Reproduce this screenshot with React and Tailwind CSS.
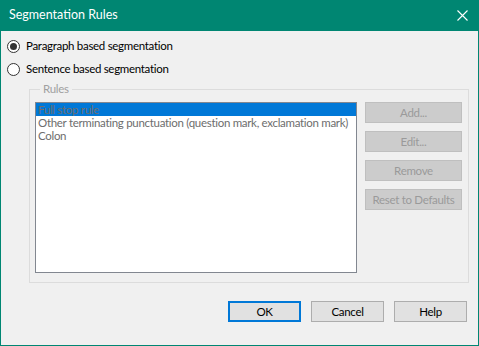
import React from "react"

function Radio({ checked, label }) {
	return (
		<div className="flex items-center h-[16px]">
			<span className="w-[13px] h-[13px] rounded-full border border-[#333333] bg-white flex items-center justify-center">
				{checked && <span className="w-[7px] h-[7px] rounded-full bg-[#333333]"></span>}
			</span>
			<span className="ml-[6px] text-black whitespace-nowrap">{label}</span>
		</div>
	)
}

function SideButton({ children }) {
	return (
		<button className="w-[97px] h-[21px] bg-[#cccccc] border border-[#bfbfbf] text-[#9a9a9a] leading-none whitespace-nowrap">
			{children}
		</button>
	)
}

function DialogButton({ children, primary }) {
	return (
		<button
			className={
				primary
					? "w-[73px] h-[21px] bg-[#e1e1e1] border-2 border-[#0078d7] text-black leading-none"
					: "w-[73px] h-[21px] bg-[#e1e1e1] border border-[#adadad] text-black leading-none"
			}
		>
			{children}
		</button>
	)
}

export default function App() {
	return (
		<div
			className="w-[479px] h-[346px] flex flex-col bg-[#f0f0f0] border-x border-b border-[#008672] text-[11.5px] tracking-[-0.3px]"
			style={{ fontFamily: 'Lato, "Liberation Sans", Arial, sans-serif' }}
		>
			{/* Title bar */}
			<div className="h-[31px] -mx-px bg-[#008672] flex items-center justify-between pl-[9px] pr-[11px] text-white">
				<span className="text-[12.5px] tracking-normal">Segmentation Rules</span>
				<svg width="11" height="11" viewBox="0 0 11 11">
					<path d="M0.5 0.5 L10.5 10.5 M10.5 0.5 L0.5 10.5" stroke="white" strokeWidth="1.1" />
				</svg>
			</div>

			{/* Body */}
			<div className="flex-1 flex flex-col px-[6px]">
				<div className="mt-[7px] flex flex-col gap-[7px]">
					<Radio checked label="Paragraph based segmentation" />
					<Radio label="Sentence based segmentation" />
				</div>

				<fieldset className="mt-[5px] ml-[22px] mr-[3px] border border-[#dcdcdc] pl-[5px] pr-[5px] pb-[9px] pt-[6px] flex">
					<legend className="ml-[5px] px-[3px] text-[#a0a0a0] leading-[14px]">Rules</legend>
					<div className="flex gap-[8px] w-full">
						<div className="w-[322px] h-[171px] border border-[#828790] bg-white text-[#6d6d6d] leading-[13px] whitespace-nowrap overflow-hidden">
							<div className="bg-[#0078d7] h-[13px] px-[2px]">Full stop rule</div>
							<div className="px-[2px]">Other terminating punctuation (question mark, exclamation mark)</div>
							<div className="px-[2px]">Colon</div>
						</div>
						<div className="flex flex-col gap-[8px]">
							<SideButton>Add...</SideButton>
							<SideButton>Edit...</SideButton>
							<SideButton>Remove</SideButton>
							<SideButton>Reset to Defaults</SideButton>
						</div>
					</div>
				</fieldset>

				<div className="mt-[18px] flex justify-end gap-[10px] pr-[5px]">
					<DialogButton primary>OK</DialogButton>
					<DialogButton>Cancel</DialogButton>
					<DialogButton>Help</DialogButton>
				</div>
			</div>
		</div>
	)
}
